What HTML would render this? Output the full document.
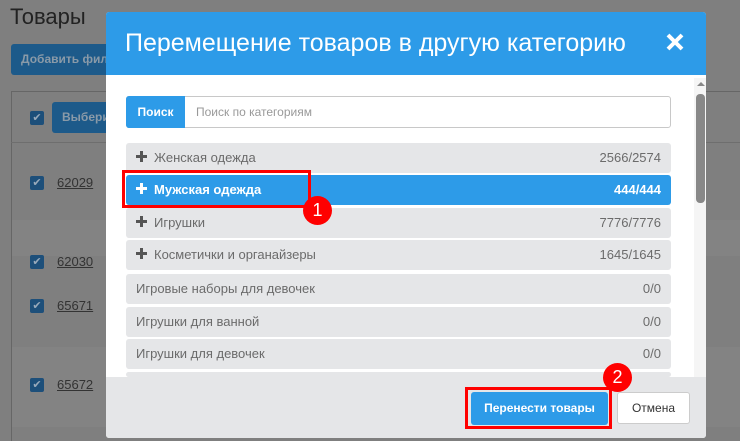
<!DOCTYPE html>
<html><head><meta charset="utf-8"><style>
*{box-sizing:border-box;margin:0;padding:0}
body{width:740px;height:441px;overflow:hidden;background:#7f7f7f;font-family:"Liberation Sans","DejaVu Sans",sans-serif;position:relative}
.a{position:absolute}
.cb{position:absolute;width:14px;height:14px;background:#1d4f7a;border-radius:2px;color:#9ab;font-size:11px;line-height:14px;text-align:center}
.lnk{position:absolute;font-size:13px;color:#333;text-decoration:underline}
.row{position:absolute;left:126px;width:545px;height:30px;background:#e5e6e8;border-radius:3px;font-size:13px;color:#6b6b6b;line-height:30px;padding-left:10px}
.row .n{position:absolute;right:10px;top:0}
.row .p{display:inline-block;width:11px;height:11px;margin-right:7px;position:relative;top:0px}
.row .p:before,.row .p:after{content:"";position:absolute;background:#555}
.row .p:before{left:0;top:4px;width:11px;height:3px}
.row .p:after{left:4px;top:0;width:3px;height:11px}
.row.s .p:before,.row.s .p:after{background:#fff}
</style></head><body>
<div class="a" style="left:10px;top:4px;font-size:22px;color:#222">Товары</div>
<div class="a" style="left:11px;top:44px;width:100px;height:31px;background:#1d5a8a;border-radius:3px;color:#8a9aa8;font-size:12px;font-weight:bold;line-height:31px;padding-left:10px">Добавить фил</div>
<div class="a" style="left:11px;top:91px;width:729px;height:350px;border-left:1px solid #666;border-top:1px solid #666"></div>
<div class="a" style="left:11px;top:142px;width:729px;height:1px;background:#6e6e6e"></div>
<div class="a" style="left:12px;top:220px;width:728px;height:36px;background:#838383"></div>
<div class="a" style="left:12px;top:347px;width:728px;height:80px;background:#838383"></div>
<div class="cb" style="left:30px;top:111px">✔</div>
<div class="a" style="left:52px;top:102px;width:60px;height:31px;background:#1d5a8a;border-radius:3px;color:#8a9aa8;font-size:12px;font-weight:bold;line-height:31px;padding-left:10px">Выбери</div>
<div class="cb" style="left:30px;top:176px">✔</div><div class="lnk" style="left:57px;top:175px">62029</div>
<div class="cb" style="left:30px;top:255px">✔</div><div class="lnk" style="left:57px;top:254px">62030</div>
<div class="cb" style="left:30px;top:299px">✔</div><div class="lnk" style="left:57px;top:298px">65671</div>
<div class="cb" style="left:30px;top:378px">✔</div><div class="lnk" style="left:57px;top:377px">65672</div>

<div class="a" style="left:106px;top:12px;width:600px;height:426px;background:#e5e6e8;border-radius:3px;overflow:hidden">
 <div class="a" style="left:0;top:0;width:600px;height:63px;background:#2d9be8;color:#fff;font-size:25px;line-height:63px;padding-left:19px">Перемещение товаров в другую категорию</div>
 <svg class="a" style="left:560px;top:21px" width="18" height="18" viewBox="0 0 18 18"><path d="M2 2L16 16M16 2L2 16" stroke="#fff" stroke-width="4"/></svg>
 <div class="a" style="left:0;top:63px;width:600px;height:302px;background:#fff"></div>
 <div class="a" style="left:588px;top:66px;width:12px;height:299px;background:#f5f5f5"></div>
 <div class="a" style="left:591px;top:70px;width:0;height:0;border-left:4px solid transparent;border-right:4px solid transparent;border-bottom:4px solid #888"></div>
 <div class="a" style="left:590px;top:82px;width:9px;height:109px;background:#888;border-radius:4px"></div>
 <div class="a" style="left:591px;top:366px;width:0;height:0;border-left:4px solid transparent;border-right:4px solid transparent;border-top:4px solid #888"></div>
</div>
<div class="a" style="left:126px;top:96px;width:545px;height:32px;border:1px solid #c8c8c8;border-radius:3px;background:#fff"></div>
<div class="a" style="left:126px;top:96px;width:59px;height:32px;background:#2d9be8;border-radius:3px 0 0 3px;color:#fff;font-size:12px;font-weight:bold;line-height:32px;text-align:center">Поиск</div>
<div class="a" style="left:196px;top:96px;font-size:12px;color:#999;line-height:32px">Поиск по категориям</div>

<div class="row" style="top:143px"><span class="p"></span>Женская одежда<span class="n">2566/2574</span></div>
<div class="row s" style="top:175px;background:#2d9be8;color:#fff;font-weight:bold"><span class="p"></span>Мужская одежда<span class="n">444/444</span></div>
<div class="row" style="top:208px"><span class="p"></span>Игрушки<span class="n">7776/7776</span></div>
<div class="row" style="top:240px"><span class="p"></span>Косметички и органайзеры<span class="n">1645/1645</span></div>
<div class="row" style="top:274px">Игровые наборы для девочек<span class="n">0/0</span></div>
<div class="row" style="top:307px">Игрушки для ванной<span class="n">0/0</span></div>
<div class="row" style="top:339px">Игрушки для девочек<span class="n">0/0</span></div>
<div class="row" style="top:372px;height:5px"></div>
<div class="a" style="left:106px;top:377px;width:600px;height:61px;background:#e5e6e8;border-radius:0 0 3px 3px"></div>

<div class="a" style="left:122px;top:170px;width:189px;height:38px;border:3px solid #f00"></div>
<div class="a" style="left:303px;top:196px;width:29px;height:29px;border-radius:50%;background:#f00;color:#fff;font-size:18px;line-height:29px;text-align:center">1</div>

<div class="a" style="left:471px;top:392px;width:137px;height:33px;background:#2d9be8;border-radius:3px;color:#fff;font-size:12px;font-weight:bold;line-height:33px;text-align:center">Перенести товары</div>
<div class="a" style="left:465px;top:387px;width:147px;height:42px;border:3px solid #f00"></div>
<div class="a" style="left:603px;top:363px;width:29px;height:29px;border-radius:50%;background:#f00;color:#fff;font-size:18px;line-height:29px;text-align:center">2</div>
<div class="a" style="left:617px;top:392px;width:73px;height:32px;background:#fff;border:1px solid #ccc;border-radius:3px;color:#333;font-size:12px;line-height:30px;text-align:center">Отмена</div>
</body></html>
